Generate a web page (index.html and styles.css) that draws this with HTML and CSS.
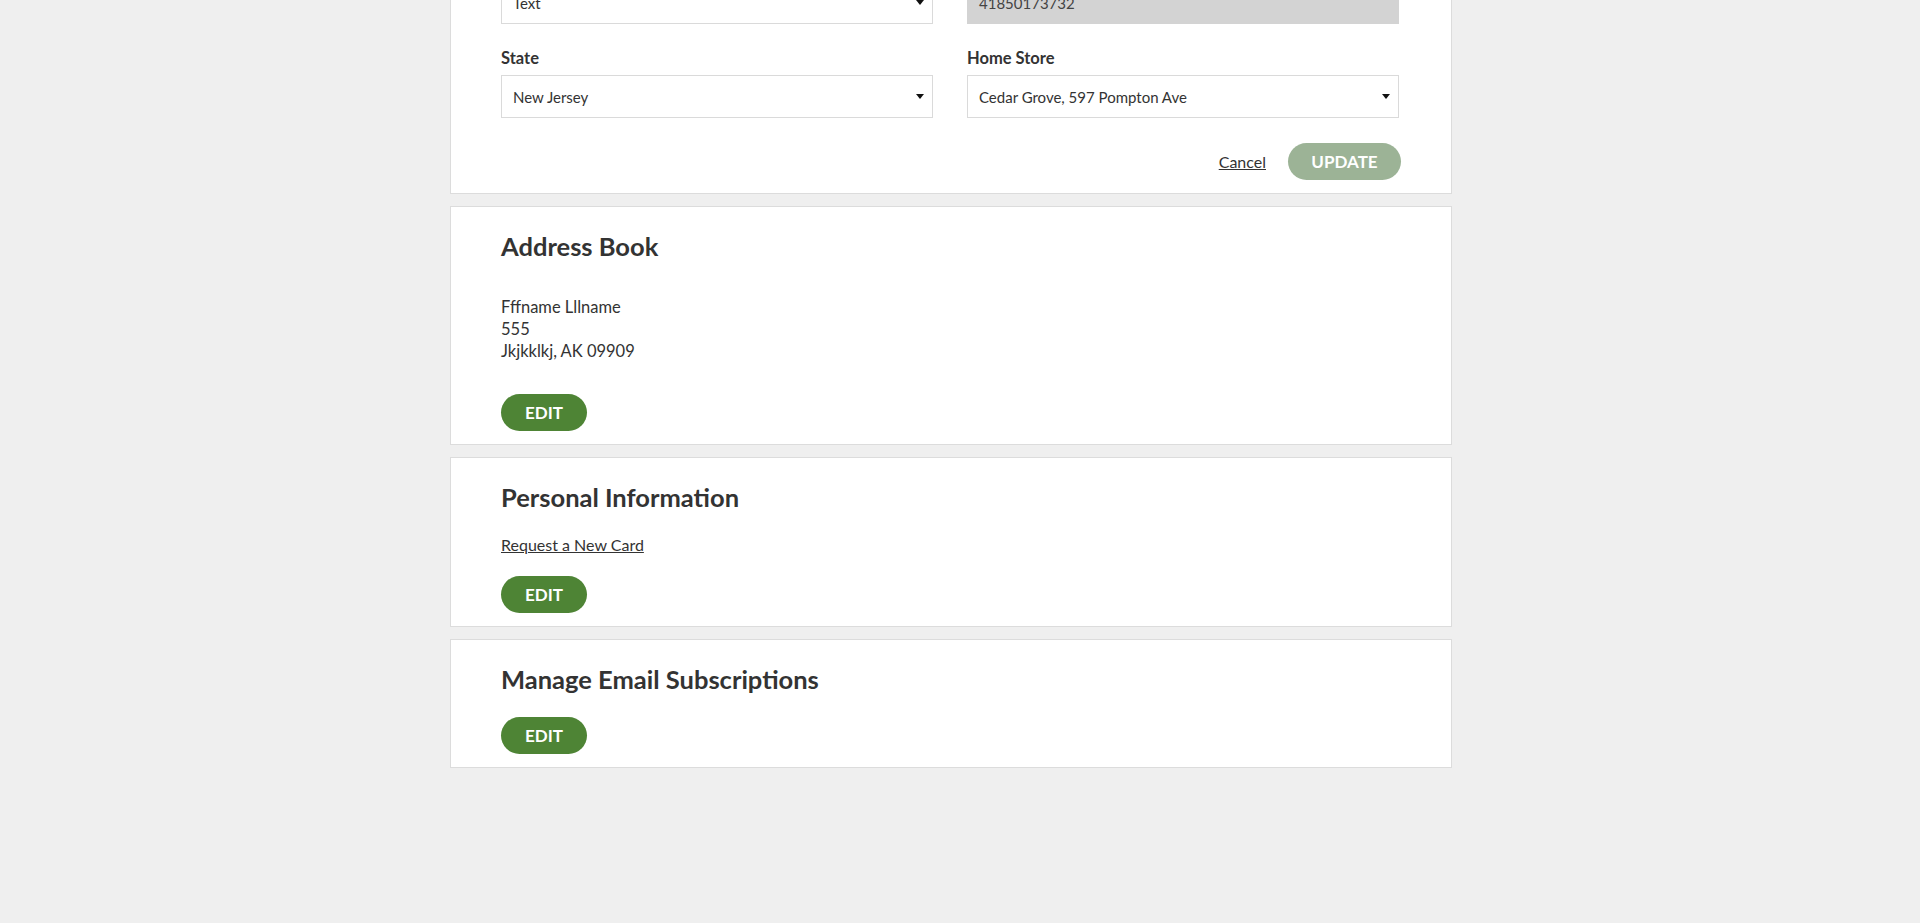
FILE: index.html
```html
<!DOCTYPE html>
<html lang="en">
<head>
<meta charset="utf-8">
<title>Account</title>
<link rel="stylesheet" href="styles.css">
</head>
<body>
<main class="page">
  <section class="card card-form">
    <div class="form-grid">
      <div class="field">
        <label class="field-label">Contact Preference</label>
        <div class="select"><span class="select-value">Text</span><svg class="caret" width="8" height="5" viewBox="0 0 8 5"><path d="M0 0H8L4 5Z" fill="#111"/></svg></div>
      </div>
      <div class="field">
        <label class="field-label">Card Number</label>
        <div class="input input-disabled">41850173732</div>
      </div>
      <div class="field">
        <label class="field-label">State</label>
        <div class="select"><span class="select-value">New Jersey</span><svg class="caret" width="8" height="5" viewBox="0 0 8 5"><path d="M0 0H8L4 5Z" fill="#111"/></svg></div>
      </div>
      <div class="field">
        <label class="field-label">Home Store</label>
        <div class="select"><span class="select-value">Cedar Grove, 597 Pompton Ave</span><svg class="caret" width="8" height="5" viewBox="0 0 8 5"><path d="M0 0H8L4 5Z" fill="#111"/></svg></div>
      </div>
    </div>
    <div class="form-actions">
      <a class="link" href="#">Cancel</a>
      <button class="btn btn-disabled" type="button">UPDATE</button>
    </div>
  </section>

  <section class="card">
    <h2 class="card-title">Address Book</h2>
    <address class="address">
      <div>Fffname Lllname</div>
      <div>555</div>
      <div>Jkjkklkj, AK 09909</div>
    </address>
    <button class="btn btn-edit btn-after-address" type="button">EDIT</button>
  </section>

  <section class="card">
    <h2 class="card-title">Personal Information</h2>
    <div class="card-row"><a class="link" href="#">Request a New Card</a></div>
    <button class="btn btn-edit btn-after-link" type="button">EDIT</button>
  </section>

  <section class="card">
    <h2 class="card-title">Manage Email Subscriptions</h2>
    <button class="btn btn-edit btn-after-title" type="button">EDIT</button>
  </section>
</main>
</body>
</html>
```

FILE: styles.css
```css
* { box-sizing: border-box; }

html, body {
  margin: 0;
  padding: 0;
  background: #efefef;
}

body {
  font-family: Lato, "Noto Sans", sans-serif;
  color: #333;
  height: 923px;
  overflow: hidden;
}

.page {
  width: 1002px;
  margin-left: 450px;
  margin-top: -70px;
  display: flex;
  flex-direction: column;
  gap: 12px;
}

.card {
  background: #fff;
  border: 1px solid #dcdcdc;
  padding: 23px 52px 13px 50px;
  display: flex;
  flex-direction: column;
  align-items: flex-start;
}

.card-form {
  align-items: stretch;
}

.form-grid {
  display: grid;
  grid-template-columns: 432px 432px;
  column-gap: 34px;
  row-gap: 24px;
}

.field {
  display: flex;
  flex-direction: column;
}

.field-label {
  font-size: 16.5px;
  line-height: 20px;
  font-weight: 700;
  color: #333;
  margin-bottom: 7px;
}

.select,
.input {
  height: 43px;
  border: 1px solid #dadada;
  display: flex;
  align-items: center;
  padding: 0 8px 0 11px;
  font-size: 15px;
  color: #333;
  background: #fff;
}

.select {
  justify-content: space-between;
}

.input-disabled {
  background: #d3d3d3;
  border-color: #d3d3d3;
  color: #444;
}

.caret {
  flex: none;
}

.form-actions {
  display: flex;
  justify-content: flex-end;
  align-items: center;
  gap: 22px;
  margin-top: 25px;
  margin-right: -2px;
}

.link {
  color: #333;
  font-size: 16px;
  line-height: 22px;
  text-decoration: underline;
}

.btn {
  font-family: inherit;
  border: none;
  border-radius: 19px;
  height: 37px;
  color: #fff;
  font-size: 17px;
  font-weight: 700;
  cursor: pointer;
  padding: 0;
}

.btn-disabled {
  background: #9cb396;
  width: 113px;
}

.btn-edit {
  background: #4e8435;
  width: 86px;
}

.card-title {
  margin: 0;
  font-size: 25.5px;
  line-height: 32px;
  font-weight: 700;
  color: #333;
}

.address {
  font-style: normal;
  font-size: 16.5px;
  line-height: 22px;
  margin-top: 34px;
}

.btn-after-address {
  margin-top: 32px;
}

.card-row {
  margin-top: 21px;
}

.btn-after-link {
  margin-top: 20px;
}

.btn-after-title {
  margin-top: 22px;
}
```
